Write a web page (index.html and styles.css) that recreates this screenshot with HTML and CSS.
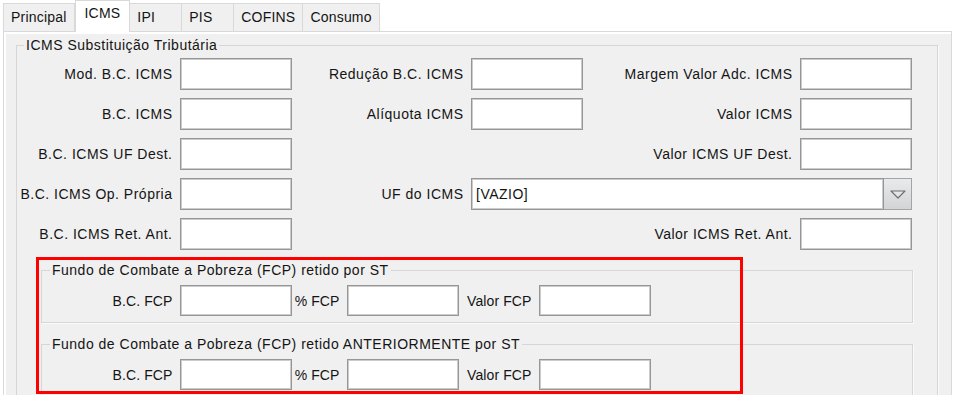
FILE: index.html
```html
<!DOCTYPE html>
<html lang="pt-BR">
<head>
    <meta charset="UTF-8">
    <title>Item - ICMS</title>
    <link rel="stylesheet" href="styles.css">
</head>
<body>
    <div class="tabs">
        <div class="tab">Principal</div>
        <div class="tab active">ICMS</div>
        <div class="tab">IPI</div>
        <div class="tab">PIS</div>
        <div class="tab">COFINS</div>
        <div class="tab">Consumo</div>
    </div>
    <div class="panel">
        <fieldset class="group">
            <legend>ICMS Substituição Tributária</legend>
            <div class="st-grid">
                <label>Mod. B.C. ICMS</label><input type="text">
                <label>Redução B.C. ICMS</label><input type="text">
                <label>Margem Valor Adc. ICMS</label><input type="text">

                <label>B.C. ICMS</label><input type="text">
                <label>Alíquota ICMS</label><input type="text">
                <label>Valor ICMS</label><input type="text">

                <label>B.C. ICMS UF Dest.</label><input type="text">
                <span></span><span></span>
                <label>Valor ICMS UF Dest.</label><input type="text">

                <label>B.C. ICMS Op. Própria</label><input type="text">
                <label>UF do ICMS</label>
                <div class="combo">
                    <div class="combo-text">[VAZIO]</div>
                    <div class="combo-btn">
                        <svg width="16" height="9" viewBox="0 0 16 9"><polygon points="1,1 15,1 8,8" fill="#e4e6e8" stroke="#6e6e6e" stroke-width="1.2" stroke-linejoin="round"/></svg>
                    </div>
                </div>

                <label>B.C. ICMS Ret. Ant.</label><input type="text">
                <span></span><span></span>
                <label>Valor ICMS Ret. Ant.</label><input type="text">
            </div>

            <fieldset class="group fcp">
                <legend>Fundo de Combate a Pobreza (FCP) retido por ST</legend>
                <div class="fcp-grid">
                    <label>B.C. FCP</label><input type="text">
                    <label>% FCP</label><input type="text">
                    <label>Valor FCP</label><input type="text">
                </div>
            </fieldset>

            <fieldset class="group fcp second">
                <legend>Fundo de Combate a Pobreza (FCP) retido ANTERIORMENTE por ST</legend>
                <div class="fcp-grid">
                    <label>B.C. FCP</label><input type="text">
                    <label>% FCP</label><input type="text">
                    <label>Valor FCP</label><input type="text">
                </div>
            </fieldset>
        </fieldset>
    </div>

    <!-- marcação vermelha sobre os campos de FCP -->
    <div class="highlight"></div>
</body>
</html>
```

FILE: styles.css
```css
html, body {
    overflow: hidden;
}
body {
    margin: 0;
    background-color: #fff;
    font-family: "Liberation Sans", Arial, sans-serif;
    font-size: 14px;
    letter-spacing: 0.5px;
    color: #141414;
    position: relative;
    height: 395px;
}

/* abas */
.tabs {
    display: flex;
    align-items: flex-end;
    height: 31px;
    padding-left: 3px;
    letter-spacing: 0.2px;
}
.tab {
    height: 28px;
    line-height: 27px;
    padding: 0 7px;
    background-color: #f0f0f0;
    border: 1px solid #d9d9d9;
    border-bottom: none;
    border-left: none;
    box-sizing: border-box;
    min-width: 52px;
}
.tab:first-child {
    border-left: 1px solid #d9d9d9;
}
.tab.active {
    position: relative;
    z-index: 1;
    height: 32px;
    line-height: 25px;
    margin-bottom: -1px;
    background-color: #fff;
    border-left: 1px solid #d9d9d9;
    padding: 0 9px;
}

/* painel */
.panel {
    margin: 0 2px 0 3px;
    height: 364px;
    background-color: #f0f0f0;
    border: 1px solid #d9d9d9;
    box-shadow: inset 1px 1px 0 #fff, inset 2px 2px 0 #fff;
    padding: 5px 13px 0 12px;
}

.group {
    margin: 0;
    padding: 5px 3px 6px 3px;
    border: 1px solid #d6d6d6;
    box-shadow: 1px 1px 0 #fbfbfb;
    min-width: 0;
}
.group legend {
    padding: 0 2px;
    margin-left: 4px;
    line-height: 16px;
}

.st-grid {
    display: grid;
    grid-template-columns: 152px 112px 163px 112px 201px 112px;
    grid-auto-rows: 32px;
    column-gap: 8px;
    row-gap: 8px;
}
.st-grid label,
.fcp-grid label {
    justify-self: end;
    align-self: center;
    white-space: nowrap;
    margin-right: -0.5px;
}

input[type="text"] {
    width: 112px;
    height: 32px;
    box-sizing: border-box;
    margin: 0;
    border: 1px solid #969696;
    box-shadow: inset 0 0 0 1px #cbcbcb;
    background-color: #fff;
    font: inherit;
}

.combo {
    grid-column: 4 / span 3;
    display: flex;
}
.combo-text {
    flex: 1;
    background-color: #fff;
    border: 1px solid #969696;
    box-shadow: inset 0 0 0 1px #cbcbcb;
    padding-left: 4px;
    line-height: 30px;
}
.combo-btn {
    width: 27px;
    border: 1px solid #a4a4a4;
    border-left: none;
    background: linear-gradient(#e9eaeb, #d2d4d6);
    display: flex;
    align-items: center;
    justify-content: center;
}

/* grupos de FCP */
.fcp {
    margin: 12px 21px 0 21px;
    padding: 7px 0 6px 0;
}
.fcp legend {
    margin-left: 8px;
}
.fcp.second {
    margin-top: 13px;
}
.fcp-grid {
    display: grid;
    grid-template-columns: 130px 112px 39px 112px 64px 112px;
    grid-auto-rows: 31px;
    column-gap: 8px;
}
.fcp-grid label {
    letter-spacing: 0.1px;
}
.fcp-grid input[type="text"] {
    height: 31px;
}

.highlight {
    position: absolute;
    left: 36px;
    top: 257px;
    width: 707px;
    height: 137px;
    box-sizing: border-box;
    border: 3px solid #f00;
}
```
